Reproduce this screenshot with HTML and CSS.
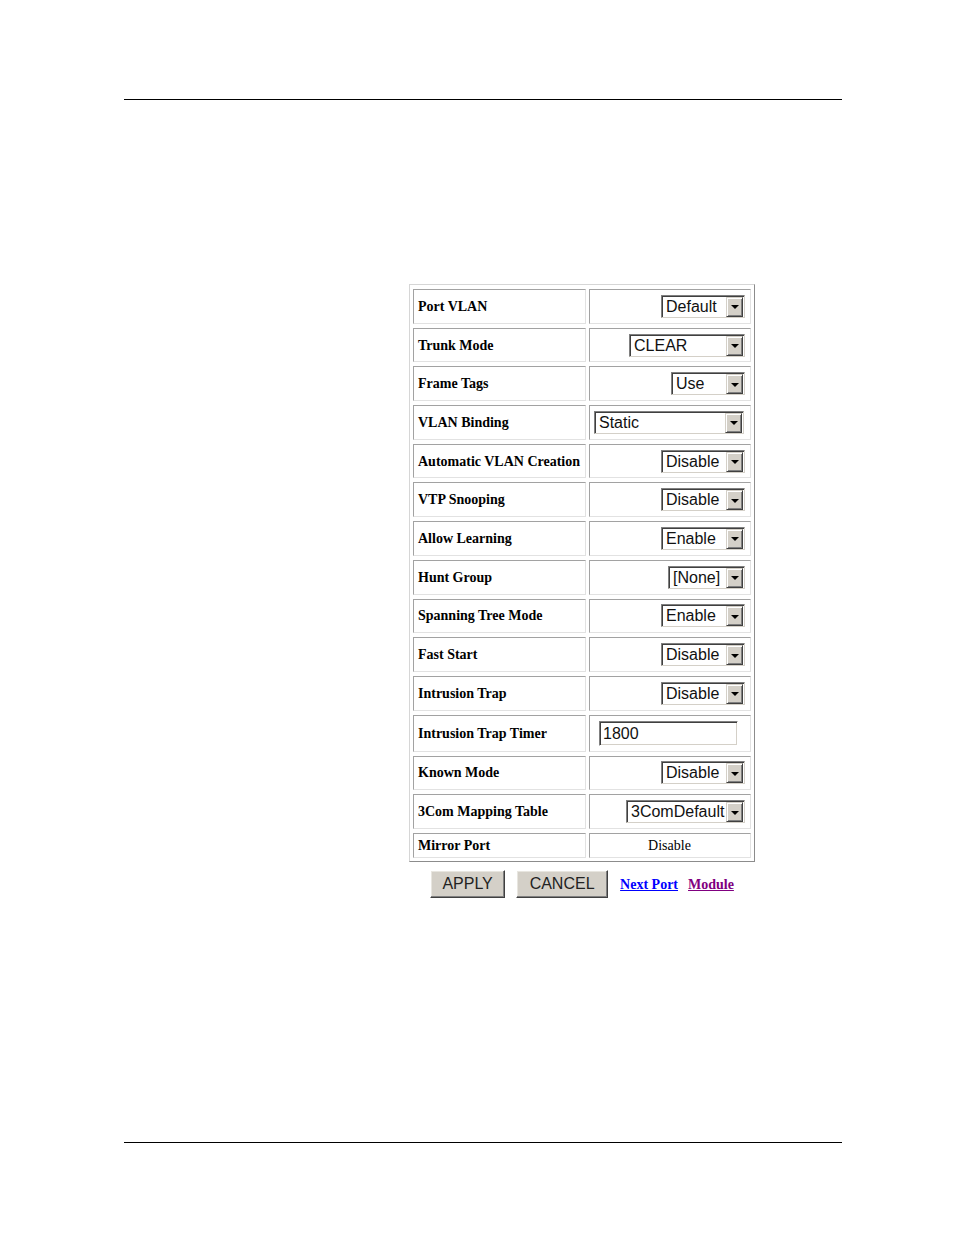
FILE: index.html
```html
<!DOCTYPE html>
<html>
<head>
<meta charset="utf-8">
<title>Port Settings</title>
<link rel="stylesheet" href="styles.css">
</head>
<body>
<div class="page">
  <div class="rule rule-top"></div>
  <main class="main">
    <div class="panel">
      <div class="cell label">Port VLAN</div>
      <div class="cell value"><span class="sel w84"><span class="sel-text">Default</span><span class="sel-btn"></span></span></div>

      <div class="cell label">Trunk Mode</div>
      <div class="cell value"><span class="sel w116"><span class="sel-text">CLEAR</span><span class="sel-btn"></span></span></div>

      <div class="cell label">Frame Tags</div>
      <div class="cell value"><span class="sel w74"><span class="sel-text">Use</span><span class="sel-btn"></span></span></div>

      <div class="cell label">VLAN Binding</div>
      <div class="cell value left"><span class="sel w150"><span class="sel-text">Static</span><span class="sel-btn"></span></span></div>

      <div class="cell label">Automatic VLAN Creation</div>
      <div class="cell value"><span class="sel w84"><span class="sel-text">Disable</span><span class="sel-btn"></span></span></div>

      <div class="cell label">VTP Snooping</div>
      <div class="cell value"><span class="sel w84"><span class="sel-text">Disable</span><span class="sel-btn"></span></span></div>

      <div class="cell label">Allow Learning</div>
      <div class="cell value"><span class="sel w84"><span class="sel-text">Enable</span><span class="sel-btn"></span></span></div>

      <div class="cell label">Hunt Group</div>
      <div class="cell value"><span class="sel w77"><span class="sel-text">[None]</span><span class="sel-btn"></span></span></div>

      <div class="cell label">Spanning Tree Mode</div>
      <div class="cell value"><span class="sel w84"><span class="sel-text">Enable</span><span class="sel-btn"></span></span></div>

      <div class="cell label">Fast Start</div>
      <div class="cell value"><span class="sel w84"><span class="sel-text">Disable</span><span class="sel-btn"></span></span></div>

      <div class="cell label">Intrusion Trap</div>
      <div class="cell value"><span class="sel w84"><span class="sel-text">Disable</span><span class="sel-btn"></span></span></div>

      <div class="cell label tall">Intrusion Trap Timer</div>
      <div class="cell value input-cell tall"><span class="textbox">1800</span></div>

      <div class="cell label">Known Mode</div>
      <div class="cell value"><span class="sel w84"><span class="sel-text">Disable</span><span class="sel-btn"></span></span></div>

      <div class="cell label">3Com Mapping Table</div>
      <div class="cell value"><span class="sel w119"><span class="sel-text">3ComDefault</span><span class="sel-btn"></span></span></div>

      <div class="cell label short">Mirror Port</div>
      <div class="cell value center short">Disable</div>
    </div>
    <div class="actions">
      <span class="btn btn-apply">APPLY</span>
      <span class="btn btn-cancel">CANCEL</span>
      <a class="link link-next" href="#">Next Port</a>
      <a class="link link-visited" href="#">Module</a>
    </div>
  </main>
  <div class="rule rule-bottom"></div>
</div>
</body>
</html>
```

FILE: styles.css
```css
html, body {
  margin: 0;
  padding: 0;
  background: #ffffff;
}

.page {
  height: 1235px;
  display: flex;
  flex-direction: column;
  font-family: "Liberation Serif", "Times New Roman", serif;
}

.rule {
  height: 1px;
  background: #000000;
  margin-left: 124px;
  margin-right: 112px;
}

.rule-top {
  margin-top: 99px;
}

.rule-bottom {
  margin-top: auto;
  margin-bottom: 92px;
}

.main {
  margin-top: 184px;
  margin-left: 409px;
  width: 346px;
}

.panel {
  box-sizing: border-box;
  width: 346px;
  border: 1px solid;
  border-color: #d6d6d6 #8c8c8c #8c8c8c #d6d6d6;
  padding: 4px 3px 3px 3px;
  display: grid;
  grid-template-columns: 173px 162px;
  column-gap: 3px;
  row-gap: 4px;
}

.cell {
  box-sizing: border-box;
  height: 34.7px;
  border: 1px solid;
  border-color: #a2a2a2 #e2e2e2 #e2e2e2 #a2a2a2;
  display: flex;
  align-items: center;
}

.cell.tall {
  height: 37px;
}

.cell.short {
  height: 25.5px;
}

.label {
  padding: 1px 0 0 4px;
  font-weight: bold;
  font-size: 14px;
  color: #000000;
  white-space: nowrap;
}

.value {
  justify-content: flex-end;
  padding: 0 5px 0 4px;
}

.value.left {
  justify-content: flex-start;
}

.value.center {
  justify-content: center;
  padding: 1px 1px 0 0;
  font-size: 14px;
  color: #000000;
}

.input-cell {
  justify-content: flex-start;
  padding-left: 9px;
}

/* select box look */
.sel {
  box-sizing: border-box;
  display: inline-flex;
  height: 23px;
  border: 1px solid;
  border-color: #808080 #d4d0c8 #d4d0c8 #808080;
  background: #ffffff;
  box-shadow: inset 1px 1px 0 #404040;
  padding: 1px 1px 0 1px;
}

.w74 { width: 74px; }
.w77 { width: 77px; }
.w84 { width: 84px; }
.w116 { width: 116px; }
.w119 { width: 119px; }
.w150 { width: 150px; }

.sel-text {
  flex: 1;
  padding-left: 3px;
  font-family: "Liberation Sans", Arial, sans-serif;
  font-size: 16px;
  line-height: 20px;
  color: #111111;
  white-space: nowrap;
  overflow: hidden;
}

.sel-btn {
  box-sizing: border-box;
  width: 17px;
  height: 20px;
  background: #d4d0c8;
  border: 1px solid;
  border-color: #d4d0c8 #404040 #404040 #d4d0c8;
  box-shadow: inset 1px 1px 0 #ffffff, inset -1px -1px 0 #808080;
  display: flex;
  align-items: center;
  justify-content: center;
}

.sel-btn::after {
  content: "";
  width: 0;
  height: 0;
  border-left: 4px solid transparent;
  border-right: 4px solid transparent;
  border-top: 4px solid #000000;
  margin-top: 1px;
}

.textbox {
  box-sizing: border-box;
  width: 139px;
  height: 25px;
  border: 1px solid;
  border-color: #808080 #ffffff #ffffff #808080;
  box-shadow: inset 1px 1px 0 #404040, inset -1px -1px 0 #d4d0c8;
  padding: 2px 3px 0 3px;
  font-family: "Liberation Sans", Arial, sans-serif;
  font-size: 16px;
  line-height: 20px;
  color: #111111;
}

.actions {
  margin-top: 8px;
  display: flex;
  justify-content: center;
  align-items: center;
}

.btn {
  box-sizing: border-box;
  display: inline-flex;
  align-items: center;
  justify-content: center;
  height: 28px;
  background: #d4d0c8;
  border: 1px solid;
  border-color: #ffffff #404040 #404040 #ffffff;
  box-shadow: inset -1px -1px 0 #808080, inset 1px 1px 0 #e8e6e0;
  font-family: "Liberation Sans", Arial, sans-serif;
  font-size: 16px;
  color: #222222;
}

.btn-apply {
  width: 75px;
}

.btn-cancel {
  width: 92px;
  margin-left: 11px;
}

.link {
  font-family: "Liberation Serif", "Times New Roman", serif;
  font-weight: bold;
  font-size: 14px;
  text-decoration: underline;
  padding-top: 2px;
}

.link-next {
  color: #0000ff;
  margin-left: 12px;
}

.link-visited {
  color: #800080;
  margin-left: 10px;
}
```
